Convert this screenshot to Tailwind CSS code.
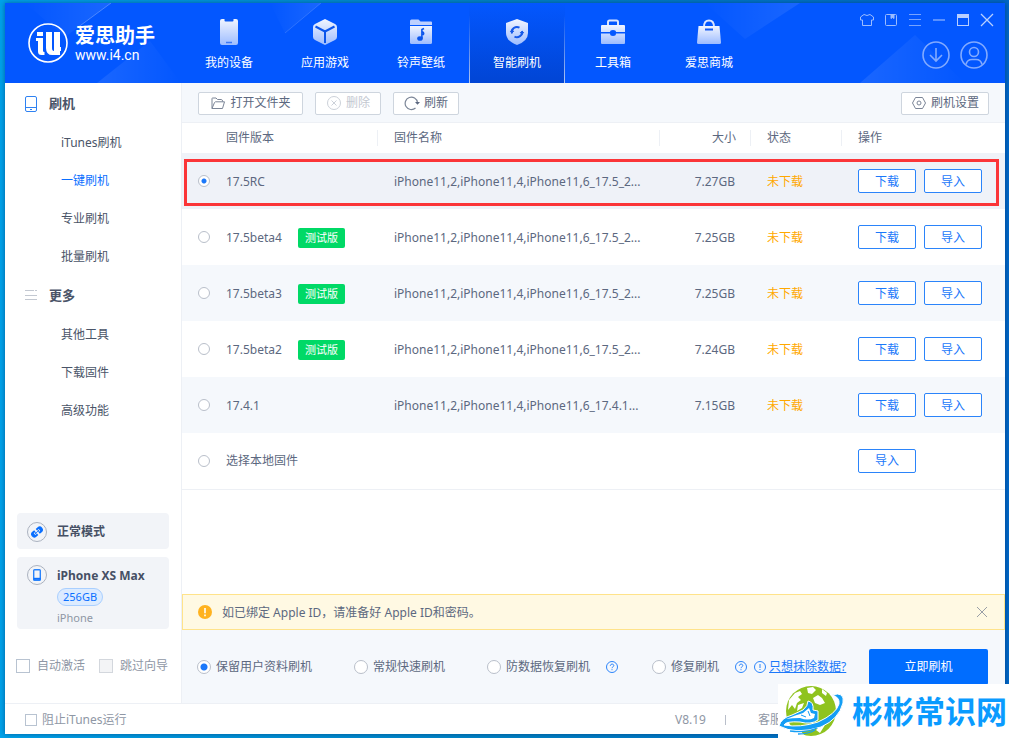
<!DOCTYPE html>
<html lang="zh-CN">
<head>
<meta charset="utf-8">
<meta name="viewport" content="width=device-width, initial-scale=1">
<title>爱思助手</title>
<script src="https://cdn.jsdelivr.net/npm/@tailwindcss/browser@4"></script>
</head>
<body class="font-['Noto_Sans','Noto_Sans_CJK_SC',sans-serif] text-xs text-[#5c6880]">
<svg class="absolute size-0" aria-hidden="true">
  <defs>
    <linearGradient id="g" x1="0" y1="0" x2="0" y2="1"><stop offset="0" stop-color="#f1f5ff"/><stop offset="1" stop-color="#9dbcff"/></linearGradient>
    <symbol id="help" viewBox="0 0 12 12"><circle cx="6" cy="6" r="5.5" fill="none" stroke="#2b84fa"/><path d="M4.3 4.8C4.3 2.5 7.8 2.6 7.8 4.6C7.8 5.8 6 5.8 6 7.2M6 8.2V9.2" fill="none" stroke="#2b84fa"/></symbol>
  </defs>
</svg>
<div class="relative flex min-h-screen flex-col bg-linear-to-r from-[#00a2ea] via-[#0083c6] to-[#0068c8] px-1 pt-[3px] pb-1 pl-[5px]">
  <div class="flex grow flex-col bg-white shadow-[0_0_5px_rgba(0,30,80,0.5)]">

    <header class="relative flex h-20 overflow-hidden bg-[#0357ff] text-white">
      <svg class="absolute inset-0 h-full w-full" viewBox="0 0 1000 80" preserveAspectRatio="none" aria-hidden="true">
        <defs>
          <linearGradient id="b1" x1="0" y1="0" x2="1" y2="0"><stop offset="0" stop-color="#fff" stop-opacity="0"/><stop offset="1" stop-color="#fff" stop-opacity=".09"/></linearGradient>
          <linearGradient id="b2" x1="0" y1="0" x2="1" y2="0"><stop offset="0" stop-color="#fff" stop-opacity=".09"/><stop offset="1" stop-color="#fff" stop-opacity="0"/></linearGradient>
        </defs>
        <path d="M20 0H106L60 34Z" fill="url(#b1)"/><path d="M106 0L72 25" stroke="#fff" stroke-opacity=".25" fill="none"/>
        <path d="M92 80L145 38L176 80Z" fill="url(#b2)"/>
        <path d="M265 0H316L280 30Z" fill="url(#b1)"/><path d="M316 0L280 30" stroke="#fff" stroke-opacity=".15" fill="none"/>
        <path d="M700 0H795L740 36Z" fill="url(#b1)"/>
        <path d="M855 80L910 32L960 80Z" fill="url(#b2)"/>
      </svg>
      <div class="relative flex w-44 shrink-0 items-center gap-[7px] pl-[23px]">
        <svg class="size-10 shrink-0" viewBox="0 0 40 40" aria-hidden="true"><circle cx="20" cy="20" r="19" fill="none" stroke="#fff" stroke-width="1.6"/><path d="M9 9h6v4H9zM8 15h7v13q0 1 1.500 1v3h-3q-3.500 0-3.500-3.500V18H8zM18 9h6v16q0 3 2 3V9h6v15h1v4h-1v4h-6q-8 1-8-7z" fill="#fff"/></svg>
        <div class="flex flex-col">
          <span class="text-xl leading-6 font-bold whitespace-nowrap">爱思助手</span>
          <span class="font-['Roboto',sans-serif] text-sm leading-[14px]">www.i4.cn</span>
        </div>
      </div>
      <nav class="relative flex [&_a]:flex [&_a]:w-24 [&_a]:flex-col [&_a]:items-center [&_a]:gap-[6px] [&_a]:pt-[14px] [&_a]:leading-5 [&_svg]:size-[30px]">
        <a href="#"><svg viewBox="0 0 30 30"><rect x="6" y="2" width="18" height="26" rx="2" fill="url(#g)"/><path d="M10.500 2h9v1.500q0 1-1 1h-7q-1 0-1-1z" fill="#0b58f2"/><path d="M12 25.500h6" stroke="#3c78f5" stroke-width="1.500"/></svg>我的设备</a>
        <a href="#"><svg viewBox="0 0 30 30"><path d="M15 2L25 7Q27 8 27 10V20Q27 22 25 23L15 28L5 23Q3 22 3 20V10Q3 8 5 7Z" fill="url(#g)"/><path d="M5.500 9.500L15 14.500L24.500 9.500M15 14.500V26" fill="none" stroke="#0b55ec" stroke-width="2"/></svg>应用游戏</a>
        <a href="#"><svg viewBox="0 0 30 30"><path d="M4 4q0-1.500 1.500-1.500h7L14.500 4.500H25q1 0 1 1V8H4z" fill="#bdd0ff"/><path d="M4 9h22v16.500q0 1.500-1.500 1.500h-19Q4 27 4 25.500z" fill="url(#g)"/><ellipse cx="14" cy="21.500" rx="2.800" ry="2.300" fill="#0b55ec"/><path d="M15.900 21.500V12.500L18 11.500M15.900 14.500Q19 16 16.800 18" fill="none" stroke="#0b55ec" stroke-width="1.600"/></svg>铃声壁纸</a>
        <a href="#" class="bg-linear-to-b from-[#0357ff] to-[#0145d4]"><svg viewBox="0 0 30 30"><path d="M15 2L26 6V16Q26 24 15 28Q4 24 4 16V6Z" fill="url(#g)"/><path d="M10 16.500A5.200 5.200 0 0 1 17.500 10.600M20 14A5.200 5.200 0 0 1 12.500 19.600" fill="none" stroke="#1659e8" stroke-width="2"/><path d="M7.800 15h4.500L10 11.800ZM17.700 15h4.500L20 18.400Z" fill="#1659e8"/></svg>智能刷机
          <span class="absolute top-3 bottom-0 left-72 w-px bg-linear-to-b from-white/0 to-white/70"></span><span class="absolute top-3 bottom-0 left-[383px] w-px bg-linear-to-b from-white/0 to-white/70"></span></a>
        <a href="#"><svg viewBox="0 0 30 30"><path d="M10 8V5q0-1.500 1.500-1.500h7Q20 3.500 20 5V8" fill="none" stroke="#dbe5ff" stroke-width="2"/><path d="M3 9q0-1 1-1h22q1 0 1 1v6h-9q0-2-3-2t-3 2H3zM3 16.500h9q0 2.500 3 2.500t3-2.500h9V26q0 1-1 1H4q-1 0-1-1z" fill="url(#g)"/></svg>工具箱</a>
        <a href="#"><svg viewBox="0 0 30 30"><path d="M10 10Q10 3.500 15 3.500T20 10" fill="none" stroke="#dbe5ff" stroke-width="1.800"/><path d="M4.500 9H25.500L27 25.500q0 1.500-1.500 1.500h-21Q3 27 3 25.500Z" fill="url(#g)"/><path d="M11 12.500h8" stroke="#1459f0" stroke-width="2"/></svg>爱思商城</a>
      </nav>
      <div class="relative ml-auto flex flex-col items-end gap-[13px] pt-[9px] pr-[10px]">
        <div class="flex gap-2 [&_button]:size-4 [&_svg]:size-4">
          <button aria-label="换肤"><svg viewBox="0 0 16 16" fill="none" stroke="#9bbcff"><path d="M5 2.500Q8 4.500 11 2.500L14.500 5V8H12.500V13.500H3.500V8H1.500V5Z"/></svg></button>
          <button aria-label="收藏"><svg viewBox="0 0 16 16" fill="none" stroke="#9bbcff"><rect x="2.500" y="2.500" width="11" height="11" rx="1"/><path d="M8 2.500V6.500L9.500 5.500L11 6.500V2.500" fill="#9bbcff"/></svg></button>
          <button aria-label="菜单"><svg viewBox="0 0 16 16" stroke="#77a3ff"><path d="M2 2.500H14M2 7.500H14M2 13.500H14"/></svg></button>
          <button aria-label="最小化"><svg viewBox="0 0 16 16" stroke="#77a3ff" stroke-width="1.500"><path d="M2 8H14"/></svg></button>
          <button aria-label="最大化"><svg viewBox="0 0 16 16" fill="none" stroke="#b9cfff"><rect x="2.500" y="2.500" width="11" height="11"/><path d="M2 4H14" stroke-width="4"/></svg></button>
          <button aria-label="关闭"><svg viewBox="0 0 16 16" stroke="#b9cfff" stroke-width="1.300"><path d="M2 2L14 14M14 2L2 14"/></svg></button>
        </div>
        <div class="flex gap-[10px] pr-[7px] [&_svg]:size-7">
          <button aria-label="下载"><svg viewBox="0 0 28 28" fill="none" stroke="#82aaff" stroke-width="1.600"><circle cx="14" cy="14" r="13"/><path d="M14 7V20M8 14L14 20L20 14"/></svg></button>
          <button aria-label="账户"><svg viewBox="0 0 28 28" fill="none" stroke="#82aaff" stroke-width="1.600"><circle cx="14" cy="14" r="13"/><circle cx="14" cy="11" r="4.500"/><path d="M6 23.500Q7 18.500 12 18.500H16Q21 18.500 22 23.500"/></svg></button>
        </div>
      </div>
    </header>

    <div class="flex grow">
      <aside class="flex w-[177px] shrink-0 flex-col border-r border-[#edf0f5]">
        <nav class="flex flex-col pt-px text-[#4a5468] [&_a]:flex [&_a]:h-[38px] [&_a]:items-center [&_a]:pl-14 [&_h2]:flex [&_h2]:h-10 [&_h2]:items-center [&_h2]:gap-[10px] [&_h2]:pl-[18px] [&_h2]:text-[13px] [&_h2]:font-bold [&_svg]:size-4">
          <h2><svg viewBox="0 0 16 16" fill="none" stroke="#2f82f2"><rect x="2.500" y=".5" width="11" height="15" rx="1.500"/><path d="M2.500 11.500H13.500M7 13.500H9"/></svg>刷机</h2>
          <a href="#">iTunes刷机</a>
          <a href="#" class="text-[#0a6fff]">一键刷机</a>
          <a href="#">专业刷机</a>
          <a href="#">批量刷机</a>
          <h2><svg viewBox="0 0 16 16" stroke="#c3c8d1"><path d="M2 2.500H11M12 2.500H14M2 7.500H14M2 11.500H14"/></svg>更多</h2>
          <a href="#">其他工具</a>
          <a href="#">下载固件</a>
          <a href="#">高级功能</a>
        </nav>
        <div class="mt-auto flex flex-col gap-2 px-3">
          <div class="flex h-9 items-center gap-[10px] rounded-sm bg-[#f2f4f8] pt-px pl-[10px] font-bold text-[#465065]">
            <svg class="size-5" viewBox="0 0 20 20" fill="none"><circle cx="10" cy="10" r="9.500" stroke="#abb2bf"/><g transform="rotate(-40 10 10)"><path d="M9 6.800H6.500a3.200 3.200 0 0 0 0 6.400H9V11.200H6.800V8.800H9ZM11 6.800H13.500a3.200 3.200 0 0 1 0 6.400H11V11.200H13.200V8.800H11Z" fill="#0a6fff"/><path d="M7.500 10H12.500" stroke="#0a6fff" stroke-width="1.400" stroke-dasharray="2 1"/></g></svg>
            正常模式
          </div>
          <div class="flex h-[72px] gap-[10px] rounded-sm bg-[#f2f4f8] pt-2 pl-[10px]">
            <svg class="size-5" viewBox="0 0 20 20" fill="none"><circle cx="10" cy="10" r="9.500" stroke="#abb2bf"/><rect x="6.700" y="4.700" width="6.600" height="10.600" rx=".8" stroke="#2b84fa" stroke-width="1.400"/><path d="M6.500 13.800H13.500" stroke="#0a6fff" stroke-width="2"/></svg>
            <div class="flex flex-col items-start">
              <span class="pt-px leading-5 font-bold text-[#465065]">iPhone XS Max</span>
              <span class="mt-[2px] flex h-[18px] items-center rounded-full border border-[#a9cfff] bg-[#dcebff] px-[5px] text-[11px] text-[#0a6fff]">256GB</span>
              <span class="mt-1 text-[11px] leading-4 text-[#8f97a5]">iPhone</span>
            </div>
          </div>
        </div>
        <div class="flex gap-[14px] py-[29px] pl-[11px] whitespace-nowrap text-[#8f97a5] [&_input]:size-[14px] [&_input]:appearance-none [&_input]:border [&_input]:border-[#b8c3d1] [&_label]:flex [&_label]:items-center [&_label]:gap-[7px]">
          <label><input type="checkbox">自动激活</label>
          <label><input type="checkbox" disabled class="disabled:border-[#d3d7dd] disabled:bg-[#f3f4f6]">跳过向导</label>
        </div>
      </aside>

      <main class="relative flex min-w-0 grow flex-col">
        <div class="flex h-10 items-center border-b border-[#edf0f5] bg-[#f5f8fc] px-4 pt-px [&_button]:flex [&_button]:h-[23px] [&_button]:items-center [&_button]:justify-center [&_button]:gap-1 [&_button]:rounded-xs [&_button]:border [&_button]:border-[#ced5de] [&_button]:bg-white [&_svg]:size-4">
          <div class="flex gap-3">
            <button class="w-[105px]"><svg viewBox="0 0 16 16" fill="none" stroke="#7b8597"><path d="M2 13.500V3.500Q2 3 2.500 3H6L7.500 4.500H11.500Q12.500 4.500 12.500 6.500M2 13.500L4.500 7.500Q5 6.800 5.500 6.800H14.500L12.500 13.500Z"/></svg>打开文件夹</button>
            <button class="w-[66px] text-[#c3c8d1]" disabled><svg viewBox="0 0 16 16" fill="none" stroke="#ccd1d9"><circle cx="8" cy="8" r="6.500"/><path d="M5.500 5.500L10.500 10.500M10.500 5.500L5.500 10.500"/></svg>删除</button>
            <button class="w-[66px]"><svg viewBox="0 0 16 16" fill="none" stroke="#7b8597" stroke-width="1.200"><path d="M11.500 13A6.200 6.200 0 1 1 13.500 7.500"/><path d="M11 7H16L13.500 9.800Z" fill="#5c6880" stroke="none"/></svg>刷新</button>
          </div>
          <button class="ml-auto w-22"><svg viewBox="0 0 16 16" fill="none" stroke="#7b8597"><path d="M4.500 2.500H11.500L14.500 8L11.500 13.500H4.500L1.500 8Z"/><circle cx="8" cy="8" r="2"/></svg>刷机设置</button>
        </div>

        <table class="w-full table-fixed border-collapse text-left [&_td]:p-0 [&_td]:pt-px [&_td:nth-child(3)]:pl-4 [&_td:nth-child(4)]:pr-4 [&_td:nth-child(4)]:text-right [&_td:nth-child(5)]:pl-4 [&_td:nth-child(5)]:text-[#ffa800] [&_td:nth-child(6)]:pt-0 [&_td:nth-child(6)]:pl-4 [&_td:nth-child(1)]:pt-0 [&_th]:p-0 [&_th]:font-normal [&_tbody_tr]:h-14 [&_button]:mr-2 [&_button]:h-6 [&_button]:w-[58px] [&_button]:rounded-xs [&_button]:border [&_button]:border-[#2b84fa] [&_button]:bg-white [&_button]:pt-px [&_button]:text-[#1b78fa] [&_input]:ml-4 [&_input]:block [&_input]:size-3 [&_input]:appearance-none [&_input]:rounded-full [&_input]:border [&_input]:border-[#b9bfca] [&_input]:bg-white [&_mark]:ml-4 [&_mark]:inline-block [&_mark]:h-5 [&_mark]:w-[47px] [&_mark]:rounded-xs [&_mark]:bg-[#00d966] [&_mark]:text-center [&_mark]:text-[11px] [&_mark]:leading-5 [&_mark]:text-white [&_th>span]:block [&_th>span]:border-[#edf0f5] [&_th>span]:leading-4">
          <colgroup><col class="w-11"><col class="w-[152px]"><col><col class="w-[91px]"><col class="w-[91px]"><col class="w-[163px]"></colgroup>
          <thead><tr class="h-[30px]">
            <th aria-label="选择"></th>
            <th><span class="border-r">固件版本</span></th>
            <th><span class="border-r pl-4">固件名称</span></th>
            <th><span class="border-r pr-[14px] text-right">大小</span></th>
            <th><span class="border-r pl-4">状态</span></th>
            <th><span class="pl-4">操作</span></th>
          </tr></thead>
          <tbody>
            <tr class="bg-[#eff2f8]"><td><input type="radio" name="fw" aria-label="17.5RC" checked class="checked:bg-[radial-gradient(circle,#1b78fa_2px,transparent_3px)]"></td><td>17.5RC</td><td>iPhone11,2,iPhone11,4,iPhone11,6_17.5_2...</td><td>7.27GB</td><td>未下载</td><td><button>下载</button><button>导入</button></td></tr>
            <tr><td><input type="radio" name="fw" aria-label="17.5beta4"></td><td>17.5beta4<mark>测试版</mark></td><td>iPhone11,2,iPhone11,4,iPhone11,6_17.5_2...</td><td>7.25GB</td><td>未下载</td><td><button>下载</button><button>导入</button></td></tr>
            <tr class="bg-[#f5f8fc]"><td><input type="radio" name="fw" aria-label="17.5beta3"></td><td>17.5beta3<mark>测试版</mark></td><td>iPhone11,2,iPhone11,4,iPhone11,6_17.5_2...</td><td>7.25GB</td><td>未下载</td><td><button>下载</button><button>导入</button></td></tr>
            <tr><td><input type="radio" name="fw" aria-label="17.5beta2"></td><td>17.5beta2<mark>测试版</mark></td><td>iPhone11,2,iPhone11,4,iPhone11,6_17.5_2...</td><td>7.24GB</td><td>未下载</td><td><button>下载</button><button>导入</button></td></tr>
            <tr class="bg-[#f5f8fc]"><td><input type="radio" name="fw" aria-label="17.4.1"></td><td>17.4.1</td><td>iPhone11,2,iPhone11,4,iPhone11,6_17.4.1...</td><td>7.15GB</td><td>未下载</td><td><button>下载</button><button>导入</button></td></tr>
            <tr class="border-b border-[#edf0f5]"><td><input type="radio" name="fw" aria-label="选择本地固件"></td><td>选择本地固件</td><td></td><td></td><td></td><td><button>导入</button></td></tr>
          </tbody>
        </table>
        <div class="pointer-events-none absolute top-[76px] right-[6px] left-[2px] h-[47px] border-3 border-[#fb3538]"></div>

        <div class="mt-auto flex h-9 items-center gap-[10px] border border-[#ffe38a] bg-[#fff9e3] pr-4 pl-[15px]">
          <svg class="size-[14px]" viewBox="0 0 14 14"><circle cx="7" cy="7" r="7" fill="#ffb21f"/><path d="M7 3V8.200M7 9.500V11.200" stroke="#fff" stroke-width="1.600"/></svg>
          <p class="pt-px">如已绑定 Apple ID，请准备好 Apple ID和密码。</p>
          <button class="ml-auto" aria-label="关闭提示"><svg class="size-3" viewBox="0 0 12 12" stroke="#9a9fa6"><path d="M1 1L11 11M11 1L1 11"/></svg></button>
        </div>
        <form class="flex h-[73px] items-center bg-[#f5f8fc] pr-[17px] pl-[15px] whitespace-nowrap [&_input]:size-[14px] [&_input]:appearance-none [&_input]:rounded-full [&_input]:border [&_input]:border-[#b9bfca] [&_input]:bg-white [&_label]:flex [&_label]:items-center [&_label]:gap-[5px] [&_svg]:size-3">
          <label><input type="radio" name="mode" checked class="checked:bg-[radial-gradient(circle,#1b78fa_3px,transparent_4px)]">保留用户资料刷机</label>
          <label class="ml-[42px]"><input type="radio" name="mode">常规快速刷机</label>
          <label class="ml-[42px]"><input type="radio" name="mode">防数据恢复刷机</label>
          <svg class="ml-4" aria-hidden="true"><use href="#help"/></svg>
          <label class="ml-[34px]"><input type="radio" name="mode">修复刷机</label>
          <svg class="ml-4" aria-hidden="true"><use href="#help"/></svg>
          <svg class="ml-[7px]" viewBox="0 0 12 12" fill="none" stroke="#2b84fa" aria-hidden="true"><circle cx="6" cy="6" r="5.500"/><path d="M6 3V7M6 8V9"/></svg>
          <a href="#" class="ml-[3px] text-[#1b78fa] underline">只想抹除数据?</a>
          <button type="button" class="ml-auto h-9 w-[119px] rounded-xs bg-[#006dff] text-white">立即刷机</button>
        </form>
      </main>
    </div>

    <footer class="flex h-[31px] items-center border-t border-[#edf0f5] pt-px pr-[223px] pl-5 text-[#8f97a5]">
      <label class="flex items-center gap-[5px]"><input type="checkbox" class="size-3 appearance-none border border-[#b8c3d1]">阻止iTunes运行</label>
      <span class="ml-auto">V8.19</span>
      <span class="mr-8 ml-[19px] h-[10px] w-px bg-[#b9bfca]"></span>
      <a href="#">客服</a>
    </footer>
  </div>

  <div class="absolute right-0 bottom-0 flex h-[54px] w-[231px] items-center bg-white">
    <svg class="h-[54px] w-[70px] shrink-0" viewBox="0 0 70 54" aria-hidden="true">
      <circle cx="33" cy="27" r="25" fill="#8fc31f"/>
      <path d="M11 16L17 9L22 7L24 10L20 13L23 16L19 19L17 25L14 21L10 26ZM29 4L35 3L38 6L34 10L30 9ZM35 14L40 11L44 14L47 19L42 21L37 19ZM44 5L49 9L48 12L44 9ZM38 46L43 41L47 41L42 49ZM12 44L22 46L26 51L17 49ZM20 21L26 19L24 24L19 27Z" fill="#fff"/>
      <path d="M1 42Q3 34 14 31L25 26Q30 22 30 17Q36 18 35 26L40 27L40 36Q33 41 22 38Q8 37 6 41Q22 44 40 38Q58 30 61 20Q62 13 54 11Q67 7 65 19Q61 35 43 43Q18 51 1 42Z" fill="#149ef5" stroke="#fff"/>
      <path d="M8 35Q18 31 25 29L31 24L33 29L37 30L36 34Q30 37 22 34Q14 34 8 35Z" fill="#fff"/>
      <path d="M23 31L28 33M30 27L32 32" stroke="#149ef5" fill="none"/>
      <path d="M12 47Q28 49 39 44M20 50Q31 50 37 46" fill="none" stroke="#149ef5" stroke-width="1.300"/>
    </svg>
    <span class="ml-1 text-[31px] leading-none font-bold whitespace-nowrap text-[#0a9bff]">彬彬常识网</span>
  </div>
</div>
</body>
</html>
